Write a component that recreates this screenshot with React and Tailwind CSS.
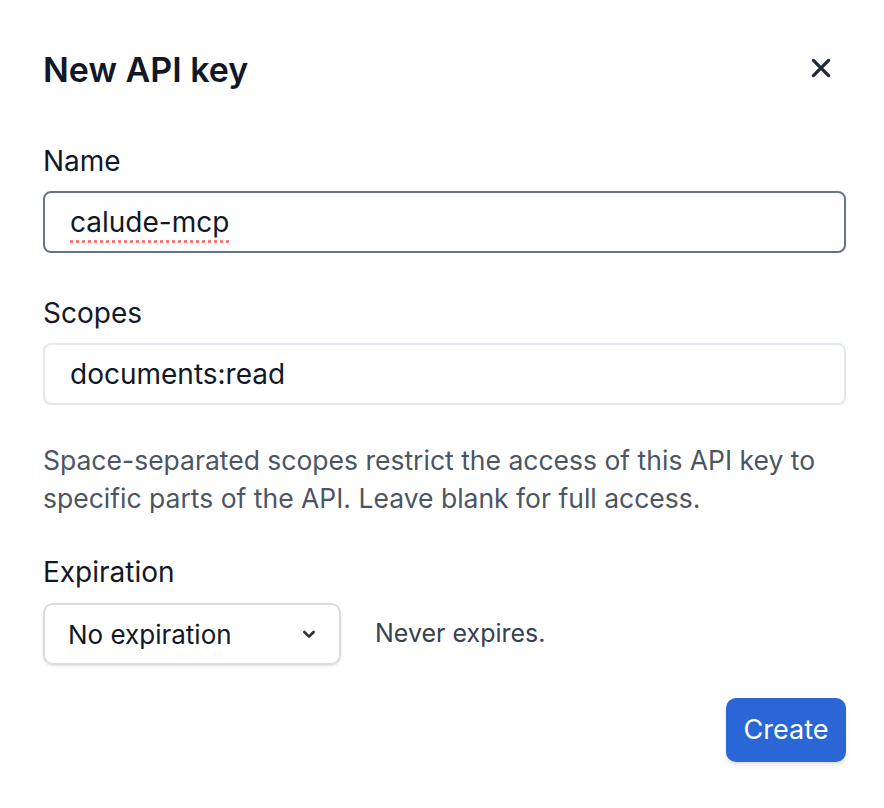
export default function App() {
  return (
    <div className="min-h-[808px] bg-white pl-[43px] pr-[38px] pt-[46px] text-[#111827]" style={{ fontFamily: 'Inter, "Noto Sans", sans-serif' }}>
      <div className="flex items-center justify-between">
        <h1 className="text-[34px] font-semibold leading-[48px]">New API key</h1>
        <svg width="26" height="26" viewBox="0 0 24 24" className="mr-[12px] -mt-[4px]" fill="none" stroke="#1f2937" strokeWidth="3" strokeLinecap="round"><path d="M5 5l14 14M19 5L5 19" /></svg>
      </div>
      <div className="mt-[47px] text-[28px] leading-[40px]">Name</div>
      <div className="mt-[10px] flex h-[62px] items-center rounded-[8px] border-2 border-[#64748b] px-[25px] text-[28px]">
        <span className="underline decoration-dotted decoration-[#f87171] underline-offset-[8px]">calude-mcp</span>
      </div>
      <div className="mt-[40px] text-[28px] leading-[40px]">Scopes</div>
      <div className="mt-[10px] flex h-[62px] items-center rounded-[8px] border-2 border-[#e2e8f0] px-[25px] text-[28px]">documents:read</div>
      <p className="mt-[36px] text-[26.5px] leading-[38px] text-[#4b5563]">Space-separated scopes restrict the access of this API key to specific parts of the API. Leave blank for full access.</p>
      <div className="mt-[35px] text-[28px] leading-[40px]">Expiration</div>
      <div className="mt-[11px] flex items-center gap-[34px]">
        <div className="flex h-[62px] w-[298px] items-center justify-between rounded-[10px] border-2 border-[#dcdcdc] pl-[23px] pr-[22px] text-[26px] shadow-sm">
          <span>No expiration</span>
          <svg width="16" height="16" viewBox="0 0 24 24" fill="none" stroke="#333" strokeWidth="4" strokeLinecap="round" strokeLinejoin="round"><path d="M5 9l7 7 7-7" /></svg>
        </div>
        <span className="text-[25px] text-[#374151]">Never expires.</span>
      </div>
      <div className="mt-[33px] flex justify-end">
        <button className="h-[64px] w-[120px] rounded-[10px] bg-[#2b66d6] text-[27px] text-white shadow-md">Create</button>
      </div>
    </div>
  )
}
